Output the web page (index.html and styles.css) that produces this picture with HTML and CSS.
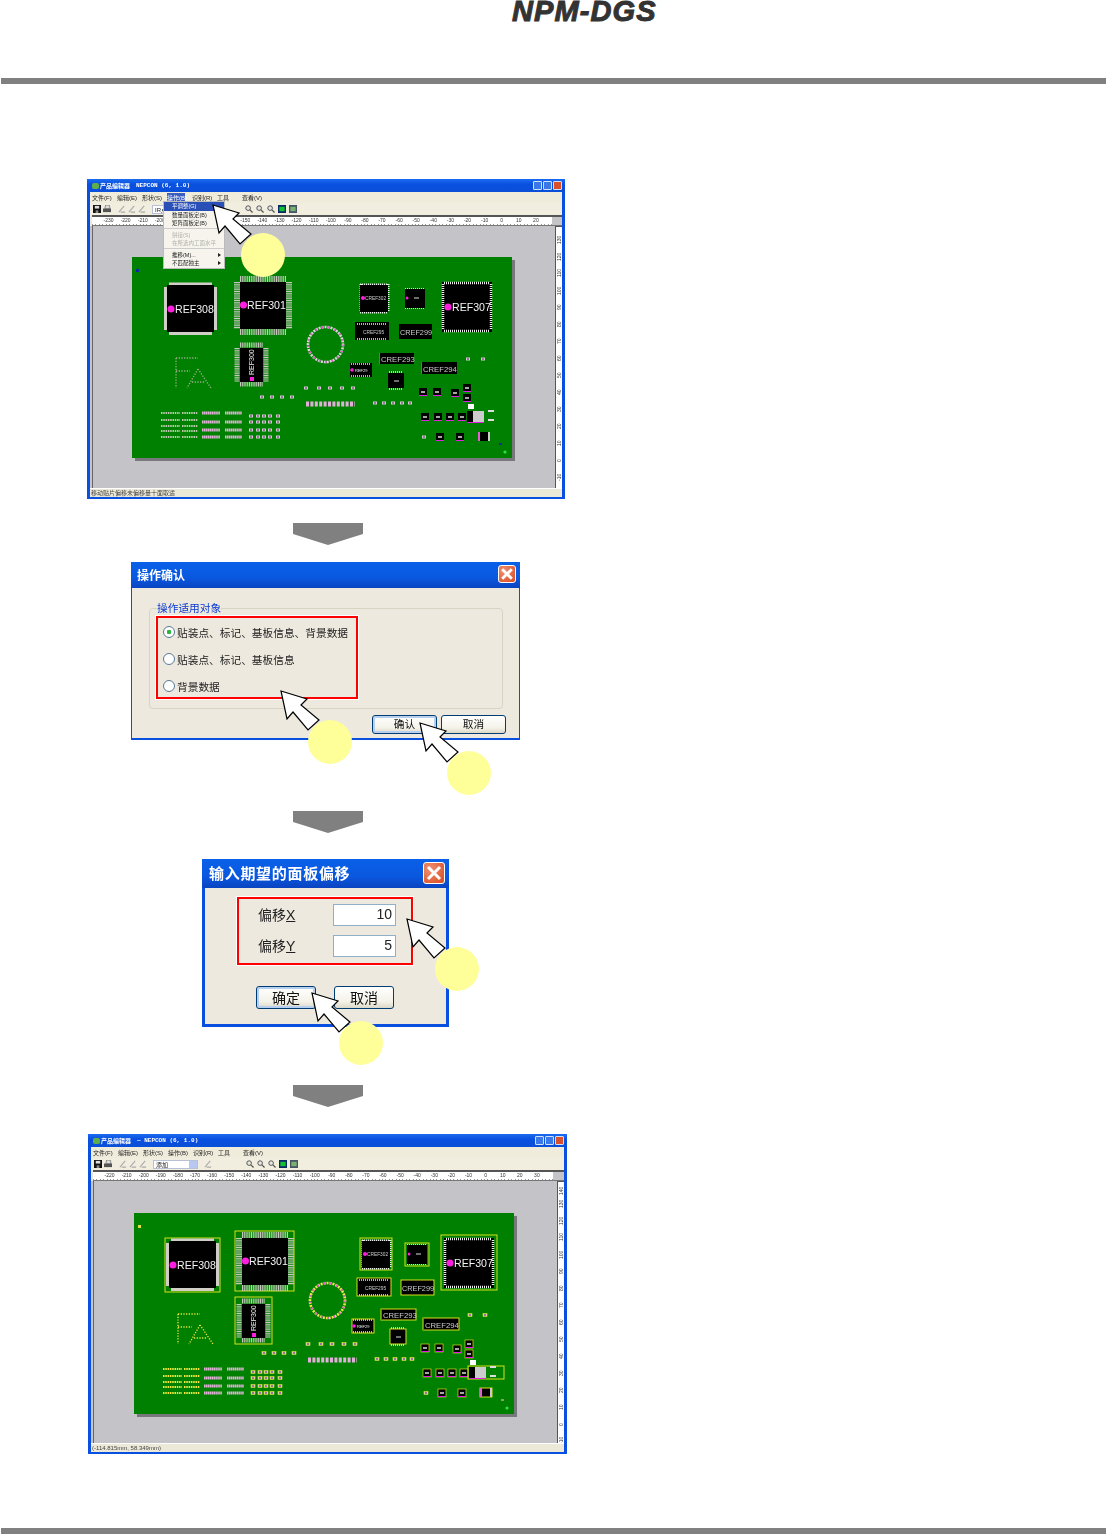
FILE: index.html
```html
<!DOCTYPE html>
<html lang="zh-CN">
<head>
    <meta charset="UTF-8">
    <title>NPM-DGS</title>
    <link rel="stylesheet" href="styles.css">
</head>
<body>
    <!-- shared drawings: mouse cursor, toolbar icons, smd parts -->
    <svg class="sprite" width="0" height="0">
        <symbol id="cursor" viewBox="0 0 41 42">
            <polygon points="1,1 27,9 21,15 39,30 28,40 13,22 7,29" fill="#fff" stroke="#000" stroke-width="1.200"/>
        </symbol>
        <symbol id="i-zoom" viewBox="0 0 9 9">
            <circle cx="3.500" cy="3.500" r="2.600" fill="#e8e8d8" stroke="#445"/>
            <path d="M5.500 5.500L8.500 8.500" stroke="#554" stroke-width="1.400"/>
        </symbol>
        <symbol id="i-save" viewBox="0 0 9 9">
            <rect width="9" height="9" fill="#111"/>
            <rect x="2" y="1" width="5" height="3" fill="#ddd"/>
            <rect x="3" y="6" width="3" height="3" fill="#888"/>
        </symbol>
        <symbol id="i-print" viewBox="0 0 9 9">
            <rect y="4" width="9" height="4" fill="#555"/>
            <path d="M2 4L3 0H7L8 4Z" fill="#ddd" stroke="#444" stroke-width=".6"/>
        </symbol>
        <symbol id="i-gray" viewBox="0 0 9 9">
            <path d="M1 8L7 1M3 8H8" stroke="#aaa" stroke-width="1.200" fill="none"/>
        </symbol>
        <symbol id="i-view" viewBox="0 0 9 9">
            <rect width="9" height="9" fill="#0a2a66"/>
            <rect x="1.500" y="2" width="6" height="5" fill="#12c030"/>
        </symbol>
        <symbol id="i-grid" viewBox="0 0 9 9">
            <rect width="9" height="9" fill="#456"/>
            <rect x="1.500" y="2" width="6" height="5" fill="#7ab070"/>
        </symbol>

        <g id="smd">
            <rect x="-4" y="-4" width="8" height="8" fill="#000" stroke="var(--edge)" stroke-width=".7"/>
            <rect x="-2" y="-.7" width="4" height="1.400" fill="#eee"/>
            <rect x="-4" y="3" width="8" height="1" fill="#e020e0"/>
        </g>
        <g id="tiny">
            <rect x="-2" y="-1.500" width="4" height="3" fill="#d8c8d8" stroke="var(--edge)" stroke-width=".6"/>
            <rect x="-.8" y="-.8" width="1.600" height="1.600" fill="#7a4a7a"/>
        </g>
    </svg>

    <header class="page-head">
        <div class="logo">NPM-DGS</div>
    </header>
    <div class="rule"></div>

    <main>
        <!-- step 1: product editor with menu open -->
        <section class="step step-first">
            <div class="app">
                <div class="titlebar">
                    <span class="app-icon"></span>
                    <span class="app-title">产品编辑器</span>
                    <span class="app-name">NEPCON (6, 1.0)</span>
                    <span class="win-btns"><i></i><i></i><i class="win-close"></i></span>
                </div>
                <nav class="menubar">
                    <span>文件(F)</span><span>编辑(E)</span><span>形状(S)</span><span class="menu-on">操作(B)</span><span>识别(R)</span><span>工具</span><span>查看(V)</span>
                </nav>
                <div class="toolbar">
                    <svg class="tool"><use href="#i-save"/></svg>
                    <svg class="tool"><use href="#i-print"/></svg>
                    <svg class="tool tool-gap"><use href="#i-gray"/></svg>
                    <svg class="tool"><use href="#i-gray"/></svg>
                    <svg class="tool"><use href="#i-gray"/></svg>
                    <span class="combo">IR点</span>
                    <span class="tool-zooms">
                        <svg class="tool"><use href="#i-zoom"/></svg>
                        <svg class="tool"><use href="#i-zoom"/></svg>
                        <svg class="tool"><use href="#i-zoom"/></svg>
                        <svg class="tool"><use href="#i-view"/></svg>
                        <svg class="tool"><use href="#i-grid"/></svg>
                    </span>
                </div>
                <!-- labels under the open menu are left out -->
                <div class="hruler">
                    <span>-230</span><span>-220</span><span>-210</span><span>-200</span><span></span><span></span><span></span><span>-160</span><span>-150</span><span>-140</span><span>-130</span><span>-120</span><span>-110</span><span>-100</span><span>-90</span><span>-80</span><span>-70</span><span>-60</span><span>-50</span><span>-40</span><span>-30</span><span>-20</span><span>-10</span><span>0</span><span>10</span><span>20</span>
                </div>
                <div class="work">
                    <div class="canvas">
                        <svg class="board board-plain" viewBox="0 0 383 204">
                            <g id="pcb">
                                <rect x="3" y="3" width="380" height="201" fill="#77777c"/>
                                <rect width="380" height="201" fill="#008000"/>
                                <rect x="4" y="12" width="3" height="3" fill="var(--mark)"/>

                                <!-- REF308 -->
                                <rect x="31" y="25" width="55" height="54" fill="none" stroke="var(--edge)"/>
                                <path d="M33.500 30V73M83.500 30V73M37 27H80M37 76.500H80" stroke="#cfcfc8" stroke-width="3" fill="none"/>
                                <rect x="35" y="28" width="47" height="47" fill="#000"/>
                                <circle cx="39" cy="52" r="3.500" fill="#ff1ee0"/>
                                <text class="ref" x="43" y="56">REF308</text>

                                <!-- REF301 -->
                                <rect x="101" y="18" width="59" height="60" fill="none" stroke="var(--edge)"/>
                                <path class="pins" d="M108 22H154M108 75H154M105 25V72M157 25V72" stroke-width="6"/>
                                <rect x="108" y="25" width="46" height="47" fill="#000"/>
                                <circle cx="111.500" cy="48" r="3.500" fill="#ff1ee0"/>
                                <text class="ref" x="115" y="52">REF301</text>

                                <!-- REF302 and the small qfp next to it -->
                                <rect x="226" y="25" width="32" height="32" fill="none" stroke="var(--edge)"/>
                                <path class="pins fine" d="M228 28H256M228 55H256M229 27V55M256 27V55" stroke-width="3"/>
                                <rect x="228" y="28" width="28" height="27" fill="#000"/>
                                <circle cx="231" cy="41" r="2" fill="#ff1ee0"/>
                                <text class="ref small" x="233" y="43">CREF302</text>
                                <rect x="271" y="30" width="24" height="23" fill="none" stroke="var(--edge)"/>
                                <path class="pins fine" d="M273 32H293M273 51H293" stroke-width="2"/>
                                <rect x="273" y="32" width="20" height="19" fill="#000"/>
                                <circle cx="275" cy="41" r="1.500" fill="#ff1ee0"/>
                                <path d="M282 41H287" stroke="#ddd"/>

                                <!-- REF307 -->
                                <rect x="307" y="22" width="56" height="55" fill="none" stroke="var(--edge)"/>
                                <rect x="310" y="25" width="50" height="50" fill="#000"/>
                                <path class="pins fine" d="M312 26H358M312 74H358M311 27V73M359 27V73" stroke-width="2.500"/>
                                <circle cx="316" cy="50" r="3.500" fill="#ff1ee0"/>
                                <text class="ref" x="320" y="54">REF307</text>

                                <!-- CREF295 / CREF299 -->
                                <rect x="223" y="65" width="34" height="18" fill="#000" stroke="var(--edge)"/>
                                <path class="pins fine" d="M225 67H255M225 82H255" stroke-width="1.500"/>
                                <text class="ref small" x="231" y="77">CREF295</text>
                                <rect x="267" y="67" width="33" height="15" fill="#000" stroke="var(--edge)"/>
                                <text class="ref mid" x="268" y="78">CREF299</text>

                                <!-- ring of pads -->
                                <circle class="ring" cx="193.500" cy="87.500" r="17.500"/>
                                <circle class="ring ring-pink" cx="193.500" cy="87.500" r="17.500"/>

                                <!-- REF300 -->
                                <rect x="101" y="84" width="37" height="47" fill="none" stroke="var(--edge)"/>
                                <path class="pins" d="M108 88H131M108 127H131M105 91V125M134 91V125" stroke-width="5"/>
                                <rect x="108" y="91" width="23" height="34" fill="#000"/>
                                <rect x="118" y="120" width="4" height="4" fill="#ff1ee0"/>
                                <text class="ref vert" transform="translate(122 118) rotate(-90)">REF300</text>

                                <!-- FA marking -->
                                <path class="fa" d="M44 101H66M44 101V131M44 114H58M66 112L55 131M66 112L79 131M60 125H73"/>

                                <!-- CREF293 / 294 and neighbours -->
                                <rect x="247" y="96" width="35" height="11" fill="#000" stroke="var(--edge)"/>
                                <rect x="247" y="96" width="1" height="11" fill="#e020e0"/>
                                <text class="ref wide" x="249" y="105">CREF293</text>
                                <rect x="289" y="105" width="36" height="12" fill="#000" stroke="var(--edge)"/>
                                <rect x="289" y="105" width="1" height="12" fill="#e020e0"/>
                                <text class="ref wide" x="291" y="115">CREF294</text>
                                <rect x="218" y="106" width="22" height="14" fill="#000" stroke="var(--edge)"/>
                                <path class="pins fine" d="M219 107H239M219 119H239" stroke-width="1.500"/>
                                <circle cx="220" cy="113" r="1.800" fill="#ff1ee0"/>
                                <text class="ref tinytext" x="223" y="115">REF29</text>
                                <rect x="256" y="116" width="16" height="15" fill="#000" stroke="var(--edge)"/>
                                <path class="pins fine" d="M257 115H271M257 132H271" stroke-width="1.500"/>
                                <path d="M262 124H267" stroke="#ddd"/>
                                <use href="#tiny" x="336" y="102"/><use href="#tiny" x="351" y="102"/>

                                <!-- rows of small parts -->
                                <use href="#tiny" x="174" y="131"/><use href="#tiny" x="187" y="131"/><use href="#tiny" x="198" y="131"/><use href="#tiny" x="210" y="131"/><use href="#tiny" x="221" y="131"/>
                                <use href="#tiny" x="130" y="140"/><use href="#tiny" x="140" y="140"/><use href="#tiny" x="150" y="140"/><use href="#tiny" x="160" y="140"/>
                                <path class="bars" d="M174 147H223" stroke-width="5"/>
                                <use href="#tiny" x="243" y="146"/><use href="#tiny" x="252" y="146"/><use href="#tiny" x="261" y="146"/><use href="#tiny" x="270" y="146"/><use href="#tiny" x="278" y="146"/>
                                <use href="#smd" x="291" y="135"/><use href="#smd" x="305" y="135"/><use href="#smd" x="323" y="136"/>
                                <use href="#smd" x="335" y="131"/><use href="#smd" x="335" y="141"/>
                                <rect x="336" y="147" width="6" height="5" fill="#fff"/>
                                <use href="#smd" x="293" y="160"/><use href="#smd" x="306" y="160"/><use href="#smd" x="318" y="160"/><use href="#smd" x="330" y="160"/>

                                <!-- big part with gray body -->
                                <rect x="334" y="153" width="36" height="13" fill="none" stroke="var(--edge)"/>
                                <rect x="335" y="154" width="6" height="11" fill="#000"/>
                                <rect x="341" y="154" width="11" height="11" fill="#ccc"/>
                                <rect x="335" y="165" width="17" height="1" fill="#e020e0"/>
                                <rect x="356" y="153" width="6" height="2" fill="#ddd"/>
                                <rect x="356" y="162" width="6" height="2" fill="#ddd"/>

                                <!-- bottom row -->
                                <use href="#tiny" x="292" y="180"/><use href="#smd" x="308" y="180"/><use href="#smd" x="328" y="180"/>
                                <rect x="346" y="175" width="12" height="9" fill="#000" stroke="var(--edge)"/>
                                <rect x="346" y="175" width="2" height="9" fill="#e060d0"/><rect x="356" y="175" width="2" height="9" fill="#ccc"/>
                                <rect x="367" y="186" width="3" height="2" fill="var(--dot)"/>
                                <circle cx="373" cy="195" r="1.600" fill="#30e040"/>

                                <!-- pad rows, bottom left -->
                                <path class="lines" d="M29 156H48M50 156H66M29 163H48M50 163H66M29 169H48M50 169H66M29 174H48M50 174H66M29 180H48M50 180H66" stroke-width="2"/>
                                <path class="bars pink" d="M70 156H88M93 156H110M70 165H88M93 165H110M70 173H88M93 173H110M70 180H88M93 180H110" stroke-width="3"/>
                                <use href="#tiny" x="119" y="159"/><use href="#tiny" x="126" y="159"/><use href="#tiny" x="132" y="159"/><use href="#tiny" x="138" y="159"/><use href="#tiny" x="146" y="159"/>
                                <use href="#tiny" x="119" y="165"/><use href="#tiny" x="126" y="165"/><use href="#tiny" x="132" y="165"/><use href="#tiny" x="138" y="165"/><use href="#tiny" x="146" y="165"/>
                                <use href="#tiny" x="119" y="173"/><use href="#tiny" x="126" y="173"/><use href="#tiny" x="132" y="173"/><use href="#tiny" x="138" y="173"/><use href="#tiny" x="146" y="173"/>
                                <use href="#tiny" x="119" y="180"/><use href="#tiny" x="126" y="180"/><use href="#tiny" x="132" y="180"/><use href="#tiny" x="138" y="180"/><use href="#tiny" x="146" y="180"/>
                            </g>
                        </svg>
                    </div>
                    <div class="vruler">
                        <span>130</span><span>120</span><span>110</span><span>100</span><span>90</span><span>80</span><span>70</span><span>60</span><span>50</span><span>40</span><span>30</span><span>20</span><span>10</span><span>0</span><span>-10</span>
                    </div>
                </div>
                <div class="statusbar">移动贴片偏移未偏移量十面取适</div>
                <ul class="menu-pop">
                    <li class="pop-on">平调整(G)</li>
                    <li>数量面板定(B)</li>
                    <li class="pop-sep">矩阵面板定(B)</li>
                    <li class="pop-off">拼接(S)</li>
                    <li class="pop-off pop-sep">在所选内工面水平</li>
                    <li class="pop-arrow">推移(M)...</li>
                    <li class="pop-arrow">不匹配独主</li>
                </ul>
            </div>
            <svg class="cursor c1"><use href="#cursor"/></svg>
            <span class="mark m1"></span>
        </section>

        <div class="down down-1"></div>

        <!-- step 2: target confirmation -->
        <section class="step step-confirm">
            <div class="dialog">
                <div class="dlg-title">
                    <span>操作确认</span>
                    <span class="dlg-close"><svg viewBox="0 0 10 10"><path d="M2 2L8 8M8 2L2 8" stroke="#fff" stroke-width="1.800"/></svg></span>
                </div>
                <div class="dlg-body">
                    <fieldset class="group">
                        <legend>操作适用对象</legend>
                        <div class="choices">
                            <label class="choice"><span class="radio radio-on"></span>贴装点、标记、基板信息、背景数据</label>
                            <label class="choice"><span class="radio"></span>贴装点、标记、基板信息</label>
                            <label class="choice"><span class="radio"></span>背景数据</label>
                        </div>
                    </fieldset>
                    <div class="dlg-btns">
                        <button class="btn btn-default">确认</button>
                        <button class="btn">取消</button>
                    </div>
                </div>
            </div>
            <svg class="cursor c2"><use href="#cursor"/></svg>
            <span class="mark m2"></span>
            <svg class="cursor c3"><use href="#cursor"/></svg>
            <span class="mark m3"></span>
        </section>

        <div class="down down-2"></div>

        <!-- step 3: offset input -->
        <section class="step step-offset">
            <div class="dialog dialog-offset">
                <div class="dlg-title">
                    <span>输入期望的面板偏移</span>
                    <span class="dlg-close"><svg viewBox="0 0 10 10"><path d="M2 2L8 8M8 2L2 8" stroke="#fff" stroke-width="1.500"/></svg></span>
                </div>
                <div class="dlg-body">
                    <div class="offsets">
                        <div class="offset-row"><label>偏移<u>X</u></label><span class="field">10</span></div>
                        <div class="offset-row"><label>偏移<u>Y</u></label><span class="field">5</span></div>
                    </div>
                    <div class="offset-btns">
                        <button class="btn btn-default">确定</button>
                        <button class="btn">取消</button>
                    </div>
                </div>
            </div>
            <svg class="cursor c4"><use href="#cursor"/></svg>
            <span class="mark m4"></span>
            <svg class="cursor c5"><use href="#cursor"/></svg>
            <span class="mark m5"></span>
        </section>

        <div class="down down-3"></div>

        <!-- step 4: result -->
        <section class="step step-last">
            <div class="app app-result">
                <div class="titlebar">
                    <span class="app-icon"></span>
                    <span class="app-title">产品编辑器</span>
                    <span class="app-name">— NEPCON (6, 1.0)</span>
                    <span class="win-btns"><i></i><i></i><i class="win-close"></i></span>
                </div>
                <nav class="menubar">
                    <span>文件(F)</span><span>编辑(E)</span><span>形状(S)</span><span>操作(B)</span><span>识别(R)</span><span>工具</span><span>查看(V)</span>
                </nav>
                <div class="toolbar">
                    <svg class="tool"><use href="#i-save"/></svg>
                    <svg class="tool"><use href="#i-print"/></svg>
                    <svg class="tool tool-gap"><use href="#i-gray"/></svg>
                    <svg class="tool"><use href="#i-gray"/></svg>
                    <svg class="tool"><use href="#i-gray"/></svg>
                    <span class="combo">添加<b></b></span>
                    <svg class="tool"><use href="#i-gray"/></svg>
                    <span class="tool-zooms">
                        <svg class="tool"><use href="#i-zoom"/></svg>
                        <svg class="tool"><use href="#i-zoom"/></svg>
                        <svg class="tool"><use href="#i-zoom"/></svg>
                        <svg class="tool"><use href="#i-view"/></svg>
                        <svg class="tool"><use href="#i-grid"/></svg>
                    </span>
                </div>
                <div class="hruler">
                    <span>-220</span><span>-210</span><span>-200</span><span>-190</span><span>-180</span><span>-170</span><span>-160</span><span>-150</span><span>-140</span><span>-130</span><span>-120</span><span>-110</span><span>-100</span><span>-90</span><span>-80</span><span>-70</span><span>-60</span><span>-50</span><span>-40</span><span>-30</span><span>-20</span><span>-10</span><span>0</span><span>10</span><span>20</span><span>30</span>
                </div>
                <div class="work">
                    <div class="canvas">
                        <svg class="board board-edged" viewBox="0 0 383 204"><use href="#pcb"/></svg>
                    </div>
                    <div class="vruler vruler-shift">
                        <span>140</span><span>130</span><span>120</span><span>110</span><span>100</span><span>90</span><span>80</span><span>70</span><span>60</span><span>50</span><span>40</span><span>30</span><span>20</span><span>10</span><span>0</span><span>-10</span>
                    </div>
                </div>
                <div class="statusbar">(-114.815mm, 58.349mm)</div>
            </div>
        </section>
    </main>

    <div class="rule rule-foot"></div>
</body>
</html>
```

FILE: styles.css
```css
* {
    box-sizing: border-box;
}

body {
    margin: 0;
    background: #fff;
    font-family: "Liberation Sans", "Noto Sans CJK SC", sans-serif;
    overflow-x: hidden;
}

.sprite {
    position: absolute;
}

.page-head {
    height: 78px;
    padding-left: 512px;
}

.logo {
    font-size: 29px;
    line-height: 23px;
    font-weight: bold;
    font-style: italic;
    letter-spacing: 1.100px;
    color: #333;
    -webkit-text-stroke: 1px #333;
}

.rule {
    height: 6px;
    margin-left: 1px;
    background: #808080;
}

.rule-foot {
    margin-top: 74px;
}

.step {
    position: relative;
    width: fit-content;
}

.step-first {
    margin: 95px 0 0 87px;
}

.step-confirm {
    margin: 17px 0 0 131px;
}

.step-offset {
    margin: 26px 0 0 202px;
}

.step-last {
    margin: 27px 0 0 88px;
}

/* big gray arrows between the steps */
.down {
    width: 70px;
    height: 22px;
    margin-left: 293px;
    background: #808080;
    clip-path: polygon(0 0, 100% 0, 100% 50%, 50% 100%, 0 50%);
}

.down-1 {
    margin-top: 24px;
}

.down-2 {
    margin-top: 71px;
}

.down-3 {
    margin-top: 58px;
}

/* cursor + yellow number mark */
.cursor {
    position: absolute;
    width: 41px;
    height: 42px;
}

.mark {
    position: absolute;
    width: 44px;
    height: 44px;
    border-radius: 50%;
    background: #ffff99;
}

.c1 { left: 125px; top: 25px; }
.m1 { left: 154px; top: 54px; }
.c2 { left: 149px; top: 128px; }
.m2 { left: 177px; top: 158px; }
.c3 { left: 288px; top: 160px; }
.m3 { left: 316px; top: 189px; }
.c4 { left: 204px; top: 59px; }
.m4 { left: 233px; top: 88px; }
.c5 { left: 109px; top: 133px; }
.m5 { left: 137px; top: 162px; }

/* product editor window */
.app {
    position: relative;
    width: 478px;
    height: 320px;
    display: flex;
    flex-direction: column;
    border: 3px solid #0a50e0;
    border-top: 0;
    border-bottom-width: 2px;
    background: #ece9d8;
    font-size: 6px;
    color: #222;
    filter: blur(.35px);
}

.app-result {
    width: 479px;
}

.titlebar {
    height: 13px;
    margin: 0 -3px;
    padding-left: 5px;
    display: flex;
    align-items: center;
    color: #fff;
    font-weight: bold;
    background: linear-gradient(#1a6cf0, #0a50e0 40%, #0a4fd8);
}

.app-icon {
    width: 7px;
    height: 6px;
    margin-right: 1px;
    background: #5fae4a;
    border-radius: 2px;
}

.app-title {
    margin-right: 6px;
}

.app-name {
    font-family: "Liberation Mono", monospace;
}

.win-btns {
    margin-left: auto;
    margin-right: 3px;
    display: flex;
    gap: 1px;
}

.win-btns i {
    width: 9px;
    height: 9px;
    background: #3a78e8;
    border: 1px solid #cfe0ff;
    border-radius: 1px;
}

.win-btns .win-close {
    background: #d8502c;
}

.menubar {
    height: 11px;
    padding-left: 2px;
    display: flex;
    align-items: center;
    gap: 7px;
    background: #f0ecdc;
}

.menubar span {
    width: 18px;
    white-space: nowrap;
}

.menubar .menu-on {
    color: #fff;
    background: #3b5cc0;
}

.toolbar {
    height: 12px;
    padding-left: 3px;
    display: flex;
    align-items: center;
    background: #f2eedf;
}

.tool {
    width: 8px;
    height: 8px;
    margin-right: 2px;
}

.tool-gap {
    margin-left: 5px;
}

.combo {
    position: relative;
    width: 45px;
    height: 9px;
    margin: 0 6px 0 4px;
    padding-left: 2px;
    line-height: 8px;
    background: #fff;
    border: 1px solid #b8c0d8;
}

.combo b {
    position: absolute;
    right: 0;
    top: 0;
    width: 8px;
    height: 7px;
    background: #b8c8f0;
}

.tool-zooms {
    position: absolute;
    left: 155px;
    display: flex;
}

.tool-zooms .tool {
    margin-right: 3px;
}

.hruler {
    height: 11px;
    margin-left: 2px;
    padding: 0 0 0 8px;
    display: flex;
    border-top: 2px solid #555;
    border-bottom: 1px solid #777;
    background:
        repeating-linear-gradient(to right, #999 0 1px, transparent 1px 3.400px) left bottom / 460px 1px no-repeat,
        linear-gradient(to right, #fff 460px, #c4c4c8 460px);
    font-size: 5px;
    line-height: 7px;
    color: #333;
}

.hruler span {
    width: 17.100px;
    flex: none;
    text-align: center;
}

.work {
    flex: 1;
    display: flex;
    min-height: 0;
    background: #c4c4c8;
}

.canvas {
    flex: 1;
    margin-left: 2px;
    margin-right: 3px;
    padding: 31px 0 0 39px;
    border-left: 1px solid #666;
    background: #c4c4c8;
}

.app-result .canvas {
    padding: 32px 0 0 40px;
}

.board {
    display: block;
    width: 383px;
    height: 204px;
}

.board-plain {
    --edge: none;
    --mark: #1028a0;
    --ring: #d8d8d8;
    --fa: #a0b090;
    --line: #b8c8a8;
    --dot: #1028a0;
}

.board-edged {
    --edge: #d8e020;
    --mark: #e0e040;
    --ring: #e8e850;
    --fa: #f0e840;
    --line: #f0e840;
    --dot: #90a070;
}

.ring {
    fill: none;
    stroke: var(--ring);
    stroke-width: 2.600;
    stroke-dasharray: 2 1;
}

.ring-pink {
    stroke: #e060d0;
    stroke-dasharray: 1.500 5;
}

.pins {
    fill: none;
    stroke: #c8c8c0;
    stroke-dasharray: 1 .8;
}

.pins.fine {
    stroke: #eee;
    stroke-dasharray: 1 1;
}

.fa {
    fill: none;
    stroke: var(--fa);
    stroke-width: 1.300;
    stroke-dasharray: 1.200 1.500;
}

.lines {
    fill: none;
    stroke: var(--line);
    stroke-dasharray: 1.500 .8;
}

.bars {
    fill: none;
    stroke: #e0b0d8;
    stroke-dasharray: 3 1.400;
}

.bars.pink {
    stroke-dasharray: 1.500 .4;
}

.ref {
    fill: #f4f4f4;
    font-family: "Liberation Sans", sans-serif;
    font-size: 10.600px;
}

.ref.small {
    font-size: 4.800px;
    fill: #ccc;
}

.ref.mid {
    font-size: 7.300px;
    fill: #ccc;
}

.ref.wide {
    font-size: 7.700px;
    fill: #ccc;
}

.ref.tinytext {
    font-size: 4px;
}

.ref.vert {
    font-size: 7px;
}

.vruler {
    width: 7px;
    flex: none;
    padding-top: 4px;
    display: flex;
    flex-direction: column;
    overflow: hidden;
    background: #fff;
    border-top: 1px solid #555;
    border-left: 1px solid #555;
    font-size: 5px;
    color: #333;
}

.vruler span {
    height: 17px;
    flex: none;
    writing-mode: vertical-rl;
    transform: rotate(180deg);
    text-align: center;
    line-height: 6px;
}

.vruler-shift span:first-child {
    height: 9px;
    margin-top: 0;
}

.vruler-shift span:last-child {
    height: 8px;
    margin-top: 3px;
}

.statusbar {
    height: 9px;
    padding-left: 1px;
    line-height: 8px;
    background: #ece9d8;
    border-top: 1px solid #fff;
    color: #444;
}

.menu-pop {
    position: absolute;
    left: 73px;
    top: 22px;
    width: 62px;
    height: 68px;
    margin: 0;
    padding: 0;
    list-style: none;
    background: #f6f4ec;
    border: 1px solid #bbb;
    font-size: 5.500px;
    line-height: 8.500px;
}

.menu-pop li {
    padding-left: 8px;
    position: relative;
}

.menu-pop .pop-on {
    background: #2a50b8;
    color: #fff;
}

.menu-pop .pop-off {
    color: #b0b0a8;
}

.menu-pop .pop-sep {
    margin-bottom: 2px;
    border-bottom: 1px solid #ccc;
}

.menu-pop .pop-arrow::after {
    content: "";
    position: absolute;
    right: 3px;
    top: 2px;
    border-left: 3px solid #222;
    border-top: 2px solid transparent;
    border-bottom: 2px solid transparent;
}

/* xp dialogs */
.dialog {
    width: 389px;
    height: 178px;
    border: 1px solid #0a50e0;
    border-width: 0 1px 2px;
    background: #eee9df;
    color: #222;
    font-size: 10.700px;
    filter: blur(.25px);
}

.dlg-title {
    height: 26px;
    margin: 0 -1px;
    padding: 0 4px 2px 6px;
    display: flex;
    align-items: center;
    justify-content: space-between;
    color: #fff;
    font-size: 12px;
    font-weight: bold;
    background: linear-gradient(#0a60e8, #0a58e0 60%, #0a44c0);
}

.dlg-close {
    width: 18px;
    height: 18px;
    display: block;
    border: 1px solid #fff;
    border-radius: 3px;
    background: radial-gradient(circle at 30% 30%, #f09070, #d84a20);
}

.dlg-close svg {
    display: block;
    width: 100%;
    height: 100%;
}

.dlg-body {
    padding: 13px 13px 0 17px;
}

.group {
    margin: 0 3px 0 0;
    padding: 0 0 0 6px;
    height: 108px;
    border: 1px solid #d8d4c4;
    border-radius: 4px;
}

.group legend {
    padding: 0;
    margin-left: 1px;
    color: #0a3ad0;
    line-height: 15px;
}

.choices {
    width: 202px;
    height: 83px;
    padding: 5px 0 2px 5px;
    display: flex;
    flex-direction: column;
    justify-content: space-between;
    border: 2px solid #f00;
    outline: 1px solid #fff;
}

.choice {
    display: flex;
    align-items: center;
    gap: 2px;
    height: 18px;
    white-space: nowrap;
}

.radio {
    width: 12px;
    height: 12px;
    flex: none;
    border-radius: 50%;
    border: 1px solid #5a7a98;
    background: #fff;
}

.radio-on {
    background: radial-gradient(circle, #30b040 2px, #fff 2.500px);
}

.dlg-btns {
    margin-top: 6px;
    display: flex;
    justify-content: flex-end;
    gap: 4px;
}

.btn {
    width: 65px;
    height: 19px;
    padding: 0 0 2px;
    font: inherit;
    color: #111;
    border: 1px solid #003c74;
    border-radius: 3px;
    background: linear-gradient(#fff, #f4f2e8 70%, #dcd8c8);
}

.btn-default {
    box-shadow: inset 0 0 0 2px #b8d0f0;
}

.dialog-offset {
    width: 247px;
    height: 168px;
    border-width: 0 3px 3px;
    font-size: 14px;
}

.dialog-offset .dlg-title {
    height: 29px;
    margin: 0 -3px;
    padding: 0 4px 2px 7px;
    font-size: 15px;
    letter-spacing: .7px;
}

.dialog-offset .dlg-close {
    width: 22px;
    height: 22px;
}

.dialog-offset .dlg-body {
    padding: 9px 0 0 32px;
}

.offsets {
    width: 176px;
    height: 68px;
    padding: 5px 0 0 19px;
    display: flex;
    flex-direction: column;
    gap: 9px;
    border: 2px solid #f00;
    outline: 1px solid #fff;
}

.offset-row {
    display: flex;
    align-items: center;
    justify-content: space-between;
    height: 22px;
    padding-right: 15px;
}

.offset-row label {
    padding-bottom: 2px;
}

.field {
    width: 63px;
    height: 22px;
    padding-right: 3px;
    text-align: right;
    line-height: 19px;
    background: #fff;
    border: 1px solid #8fb0c8;
    font-size: 14px;
}

.offset-btns {
    margin: 21px 0 0 19px;
    display: flex;
    gap: 18px;
}

.offset-btns .btn {
    width: 60px;
    height: 23px;
}
```
